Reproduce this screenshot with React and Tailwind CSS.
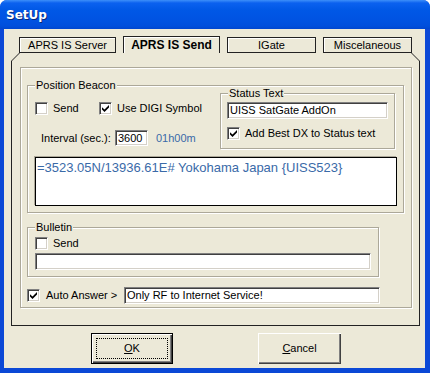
function Check({ checked }) {
  return (
    <span className="w-[13px] h-[13px] shrink-0 bg-white border border-t-[#808080] border-l-[#808080] border-b-white border-r-white shadow-[inset_1px_1px_0_#404040,inset_-1px_-1px_0_#d4d0c8] flex items-center justify-center">
      {checked && (
        <svg width="7" height="7" viewBox="0 0 7 7" className="block">
          <path d="M0 2.2 L2.5 4.6 L7 0 V2.6 L2.5 7 L0 4.6Z" fill="#000" />
        </svg>
      )}
    </span>
  )
}

function Group({ label, className, children }) {
  return (
    <div className={`relative border border-[#aca899] shadow-[inset_1px_1px_0_#fff,1px_1px_0_#fff] ${className}`}>
      <span className="absolute -top-[7px] left-[7px] px-[1px] bg-[#ece9d8] leading-[13px]">{label}</span>
      {children}
    </div>
  )
}

const SUNKEN =
  'bg-white border border-t-[#808080] border-l-[#808080] border-b-white border-r-white shadow-[inset_1px_1px_0_#404040,inset_-1px_-1px_0_#d4d0c8]'

export default function App() {
  return (
    <div className="w-[430px] h-[373px] bg-[#0b48d6] flex flex-col rounded-t-[7px] overflow-hidden font-['Liberation_Sans',Arial,sans-serif] text-[11px] text-black select-none">
      {/* Title bar */}
      <div className="h-[29px] shrink-0 flex items-center pl-[6px] bg-[linear-gradient(to_bottom,#3d8ff9_0px,#0b61ef_3px,#0058e6_10px,#0054e3_18px,#004fdc_26px,#0046cf_29px)]">
        <span className="text-white font-bold text-[12px] font-['DejaVu_Sans',sans-serif] [text-shadow:1px_1px_0_#0a2a7a]">SetUp</span>
      </div>

      <div className="flex-1 ml-[4px] mr-[5px] mb-[5px] bg-[#ece9d8] flex flex-col">
        {/* Tab control */}
        <div className="ml-[7px] mt-[7px] w-[409px]">
          <div className="flex items-end h-[17px]">
            <div className="ml-[8px] w-[97px] h-[16px] border border-[#222] shadow-[inset_1px_1px_0_#fff] flex items-center justify-center leading-none">APRS IS Server</div>
            <div className="ml-[7px] w-[97px] h-[17px] border border-b-0 border-[#222] shadow-[inset_1px_1px_0_#fff] flex items-center justify-center leading-none font-bold text-[12px]">APRS IS Send</div>
            <div className="ml-[7px] w-[89px] h-[16px] border border-[#222] shadow-[inset_1px_1px_0_#fff] flex items-center justify-center leading-none">IGate</div>
            <div className="ml-[7px] w-[89px] h-[16px] border border-[#222] shadow-[inset_1px_1px_0_#fff] flex items-center justify-center leading-none">Miscelaneous</div>
          </div>
          <svg width="409" height="8" className="block">
            <path d="M8.5 0 L0.5 8 M400.5 0 L408.5 8" stroke="#222" />
          </svg>

          <div className="h-[265px] border-l border-r border-b border-[#222] pl-[8px] pt-[6px]">
            <div className="w-[392px] h-[241px] border border-[#aca899] shadow-[inset_1px_1px_0_#fff,1px_1px_0_#fff] pl-[6px] pt-[17px] flex flex-col">
              {/* Position Beacon */}
              <Group label="Position Beacon" className="w-[377px] h-[128px] shrink-0">
                <div className="flex flex-col pl-[7px] pt-[7px]">
                  <div className="flex">
                    <div className="w-[185px] pt-[9px] flex flex-col">
                      <div className="flex items-center h-[13px]">
                        <div className="w-[64px] flex items-center">
                          <Check />
                          <span className="ml-[5px]">Send</span>
                        </div>
                        <Check checked />
                        <span className="ml-[5px]">Use DIGI Symbol</span>
                      </div>
                      <div className="mt-[15px] flex items-center h-[16px]">
                        <span className="ml-[6px] w-[74px]">Interval (sec.):</span>
                        <div className={`${SUNKEN} w-[33px] h-[16px] pl-[2px] flex items-center`}>3600</div>
                        <span className="ml-[8px] text-[#3a6aa8]">01h00m</span>
                      </div>
                    </div>
                    <Group label="Status Text" className="w-[175px] h-[56px]">
                      <div className="pl-[6px] pt-[8px] flex flex-col">
                        <div className={`${SUNKEN} w-[161px] h-[17px] pl-[2px] flex items-center`}>UISS SatGate AddOn</div>
                        <div className="mt-[8px] flex items-center h-[13px]">
                          <Check checked />
                          <span className="ml-[5px]">Add Best DX to Status text</span>
                        </div>
                      </div>
                    </Group>
                  </div>
                  <div className="mt-[8px] w-[362px] h-[49px] bg-white border border-black shadow-[-1px_-1px_0_#aca899] px-[1px] pt-[2px] text-[13px] leading-[15px] text-[#3a6aa8]">
                    =3523.05N/13936.61E# Yokohama Japan {'{UISS523}'}
                  </div>
                </div>
              </Group>

              {/* Bulletin */}
              <Group label="Bulletin" className="mt-[14px] w-[352px] h-[50px] shrink-0">
                <div className="pl-[7px] pt-[9px] flex flex-col">
                  <div className="flex items-center h-[13px]">
                    <Check />
                    <span className="ml-[5px]">Send</span>
                  </div>
                  <div className={`${SUNKEN} mt-[3px] w-[336px] h-[17px]`} />
                </div>
              </Group>

              {/* Auto answer */}
              <div className="mt-[10px] flex items-center h-[17px]">
                <Check checked />
                <span className="ml-[6px] w-[78px]">Auto Answer &gt;</span>
                <div className={`${SUNKEN} w-[256px] h-[17px] pl-[2px] flex items-center`}>Only RF to Internet Service!</div>
              </div>
            </div>
          </div>
        </div>

        {/* Buttons */}
        <div className="mt-[7px] flex">
          <button className="relative ml-[87px] w-[82px] h-[31px] border border-black flex items-center justify-center shadow-[inset_1px_1px_0_#fff,inset_-1px_-1px_0_#404040,inset_-2px_-2px_0_#808080]">
            <span className="absolute inset-[4px] border border-dotted border-black" />
            <span><u>O</u>K</span>
          </button>
          <button className="ml-[85px] w-[83px] h-[31px] flex items-center justify-center shadow-[inset_1px_1px_0_#fff,inset_-1px_-1px_0_#404040,inset_-2px_-2px_0_#808080]">
            <span><u>C</u>ancel</span>
          </button>
        </div>
      </div>
    </div>
  )
}
